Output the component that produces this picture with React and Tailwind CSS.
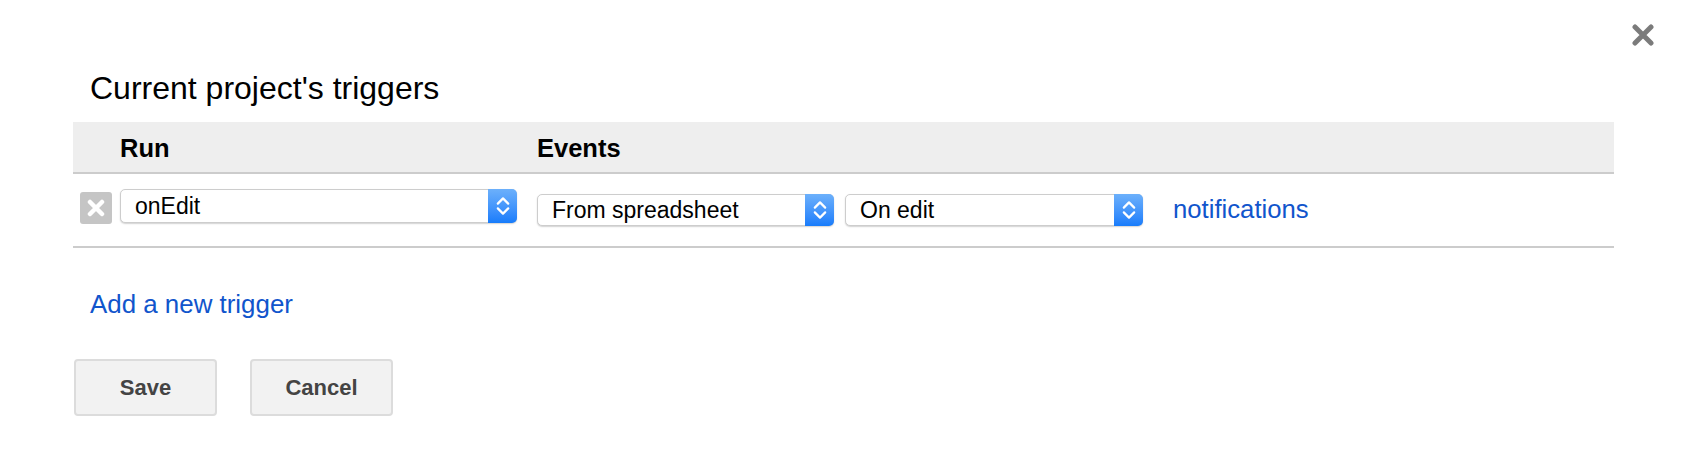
import React from "react";

function Chevrons() {
  return (
    <svg width="14" height="20" viewBox="0 0 14 20" fill="none">
      <path d="M1.8 7.6 L7 2.4 L12.2 7.6" stroke="white" strokeWidth="2.2" strokeLinecap="round" strokeLinejoin="round" />
      <path d="M1.8 12.4 L7 17.6 L12.2 12.4" stroke="white" strokeWidth="2.2" strokeLinecap="round" strokeLinejoin="round" />
    </svg>
  );
}

function MacSelect({ label, width, height, extra }) {
  return (
    <div
      className={`flex items-stretch rounded-[5px] border border-[#cdcdcd] bg-white shadow-[0_1px_1.5px_rgba(0,0,0,0.18)] ${extra}`}
      style={{ width, height }}
    >
      <div className="flex flex-1 items-center pl-[14px] text-[23px] text-black" style={{ fontFamily: '"Liberation Sans", Arial, sans-serif' }}>
        {label}
      </div>
      <div className="-my-px -mr-px flex w-[29px] items-center justify-center rounded-r-[5px] bg-gradient-to-b from-[#6cb0fb] to-[#167cfb]">
        <Chevrons />
      </div>
    </div>
  );
}

export default function App() {
  return (
    <div
      className="relative h-[460px] w-[1684px] bg-white text-black"
      style={{ fontFamily: '"Liberation Sans", Arial, sans-serif' }}
    >
      <button className="absolute left-[1632px] top-[24px] h-[22px] w-[22px]">
        <svg width="22" height="22" viewBox="0 0 22 22">
          <path d="M3 3 L19 19 M19 3 L3 19" stroke="#7b7b7b" strokeWidth="5" strokeLinecap="round" />
        </svg>
      </button>

      <div className="pl-[73px] pr-[70px] pt-[70px]">
        <h2 className="ml-[17px] text-[32px] leading-[36px] font-normal">Current project's triggers</h2>

        <div className="mt-[16px]">
          <div className="flex h-[52px] items-center border-b-2 border-[#cccccc] bg-[#eeeeee] pt-[2px] text-[25.5px] font-bold">
            <div className="w-[464px] pl-[47px]">Run</div>
            <div>Events</div>
          </div>

          <div className="flex h-[74px] items-start border-b-2 border-[#cccccc]">
            <div className="ml-[7px] mt-[18px] flex h-[32px] w-[32px] items-center justify-center rounded-[3px] bg-[#c5c5c5]">
              <svg width="18" height="18" viewBox="0 0 18 18">
                <path d="M3 3 L15 15 M15 3 L3 15" stroke="white" strokeWidth="4.5" strokeLinecap="round" />
              </svg>
            </div>
            <MacSelect label="onEdit" width={397} height={34} extra="ml-[8px] mt-[15px]" />
            <MacSelect label="From spreadsheet" width={297} height={32} extra="ml-[20px] mt-[20px]" />
            <MacSelect label="On edit" width={298} height={32} extra="ml-[11px] mt-[20px]" />
            <a className="ml-[30px] mt-[20px] text-[25.7px] leading-[30px] text-[#1155cc]" href="#">
              notifications
            </a>
          </div>
        </div>

        <a className="ml-[17px] mt-[41px] block w-fit text-[25.9px] leading-[30px] text-[#1155cc]" href="#">
          Add a new trigger
        </a>

        <div className="ml-[1px] mt-[40px] flex gap-[33px]">
          <button className="h-[57px] w-[143px] rounded-[4px] border-2 border-[#dcdcdc] bg-[#f2f2f2] text-[22px] font-bold text-[#444444]">
            Save
          </button>
          <button className="h-[57px] w-[143px] rounded-[4px] border-2 border-[#dcdcdc] bg-[#f2f2f2] text-[22px] font-bold text-[#444444]">
            Cancel
          </button>
        </div>
      </div>
    </div>
  );
}
